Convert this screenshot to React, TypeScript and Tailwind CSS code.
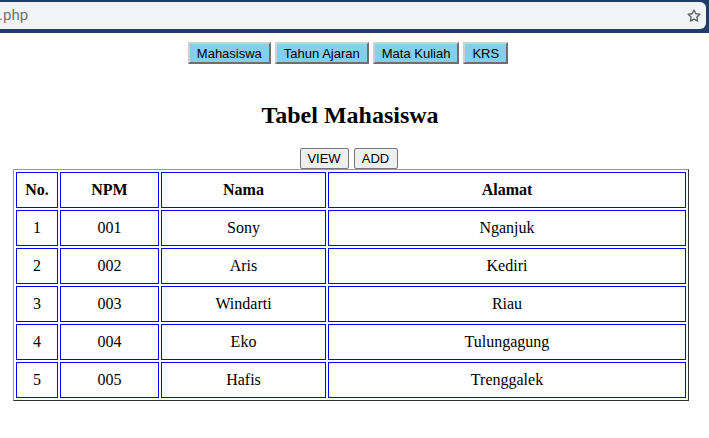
import React from 'react'

const rows = [
    { no: 1, npm: '001', nama: 'Sony', alamat: 'Nganjuk' },
    { no: 2, npm: '002', nama: 'Aris', alamat: 'Kediri' },
    { no: 3, npm: '003', nama: 'Windarti', alamat: 'Riau' },
    { no: 4, npm: '004', nama: 'Eko', alamat: 'Tulungagung' },
    { no: 5, npm: '005', nama: 'Hafis', alamat: 'Trenggalek' },
]

const menu = ['Mahasiswa', 'Tahun Ajaran', 'Mata Kuliah', 'KRS']

export default function App() {
    return (
        <div className="w-[709px] h-[438px] bg-white overflow-hidden" style={{ fontFamily: '"Liberation Serif", serif' }}>
            {/* Browser bar */}
            <div className="bg-[#223d63] pt-[2px] pb-[4px]">
                <div className="h-[27px] bg-[#f1f3f4] rounded-r-[6px] mr-[3px] flex items-center justify-between pr-[4px]">
                    <span className="text-[15px] text-[#6f7377] -ml-[1px]" style={{ fontFamily: '"Roboto", "Liberation Sans", sans-serif' }}>.php</span>
                    <svg width="16" height="16" viewBox="0 0 24 24" fill="none" stroke="#5f6368" strokeWidth="2" strokeLinejoin="round">
                        <path d="M12 3l2.7 5.6 6.1.8-4.5 4.2 1.1 6.1L12 16.8l-5.4 2.9 1.1-6.1-4.5-4.2 6.1-.8z" />
                    </svg>
                </div>
            </div>

            {/* Menu */}
            <div className="flex justify-center gap-[4px] mt-[9px] pr-[13px]" style={{ fontFamily: '"Liberation Sans", Arial, sans-serif' }}>
                {menu.map(m => (
                    <button
                        key={m}
                        className="h-[22px] px-[7px] bg-[#87ceeb] text-[13px] text-black border-2 border-t-[#d0d0d0] border-l-[#d0d0d0] border-b-[#6e6e6e] border-r-[#6e6e6e] leading-none"
                    >
                        {m}
                    </button>
                ))}
            </div>

            <h2 className="text-center font-bold text-[24px] text-black mt-[37px] leading-[28px] pr-[9px]">Tabel Mahasiswa</h2>

            <div className="flex justify-center gap-[5px] mt-[19px] pr-[12px]" style={{ fontFamily: '"Liberation Sans", Arial, sans-serif' }}>
                <button className="h-[21px] w-[49px] bg-[#efefef] border border-[#767676] rounded-[2px] text-[13px] text-black leading-none">VIEW</button>
                <button className="h-[21px] w-[44px] bg-[#efefef] border border-[#767676] rounded-[2px] text-[13px] text-black leading-none">ADD</button>
            </div>

            <div className="ml-[13px] mt-0">
                <table className="border-separate border-spacing-[2px] border border-t-[#9a9a9a] border-l-[#9a9a9a] border-b-[#333] border-r-[#333] text-[16px] text-black">
                    <thead>
                        <tr>
                            <th className="w-[42px] h-[36px] border border-[#0000ff] text-center font-bold">No.</th>
                            <th className="w-[99px] h-[36px] border border-[#0000ff] text-center font-bold">NPM</th>
                            <th className="w-[165px] h-[36px] border border-[#0000ff] text-center font-bold">Nama</th>
                            <th className="w-[358px] h-[36px] border border-[#0000ff] text-center font-bold">Alamat</th>
                        </tr>
                    </thead>
                    <tbody>
                        {rows.map(r => (
                            <tr key={r.no}>
                                <td className="h-[36px] border border-[#0000ff] text-center">{r.no}</td>
                                <td className="h-[36px] border border-[#0000ff] text-center">{r.npm}</td>
                                <td className="h-[36px] border border-[#0000ff] text-center">{r.nama}</td>
                                <td className="h-[36px] border border-[#0000ff] text-center">{r.alamat}</td>
                            </tr>
                        ))}
                    </tbody>
                </table>
            </div>
        </div>
    )
}
